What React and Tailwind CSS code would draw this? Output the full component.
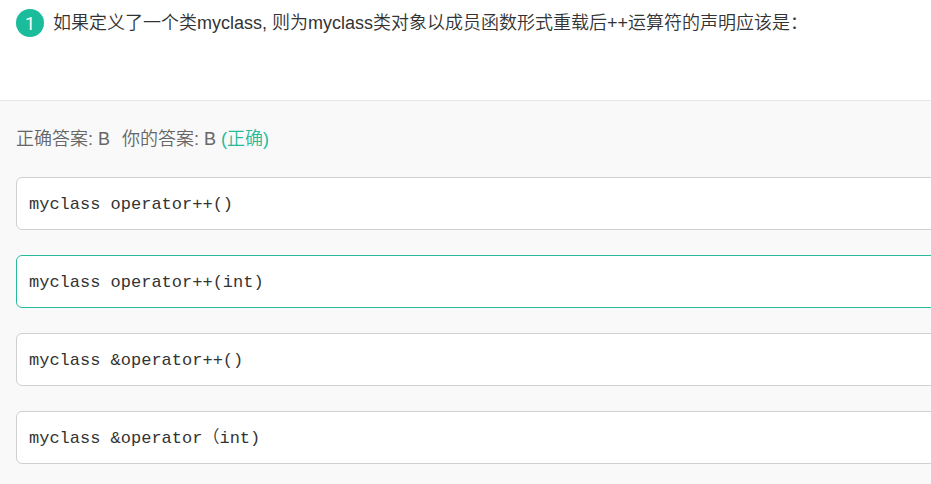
import React from 'react'

const options = [
  { id: 'A', text: 'myclass operator++()' },
  { id: 'B', text: 'myclass operator++(int)' },
  { id: 'C', text: 'myclass &operator++()' },
  { id: 'D', text: 'myclass &operator（int)' },
]

const correct = 'B'

export default function App() {
  return (
    <main className="min-h-screen overflow-x-hidden bg-[#f9f9f9] font-['Liberation_Sans','Noto_Sans_CJK_SC',sans-serif] text-[18px] font-[350]">
      <header className="flex items-start gap-[9px] border-b border-[#e8e8e8] bg-white px-4 pt-[9px] pb-[63px] text-[#333]">
        <span className="flex size-7 shrink-0 items-center justify-center rounded-full bg-[#1abc9c] font-['Roboto',sans-serif] font-normal text-white">1</span>
        <h1 className="leading-7">
          如果定义了一个类myclass, 则为myclass类对象以成员函数形式重载后++运算符的声明应该是：
        </h1>
      </header>

      <section className="pl-4 pt-6">
        <p className="flex leading-7 text-[#666]">
          <span className="mr-3">正确答案: {correct}</span>
          <span>
            你的答案: B <span className="text-[#25bb9b]">(正确)</span>
          </span>
        </p>

        {/* options run past the right edge of the panel */}
        <ul className="-mr-4 mt-6 flex flex-col gap-[25px] text-[#333]">
          {options.map(o => (
            <li
              key={o.id}
              className={`rounded-md border bg-white px-3 pt-[13px] pb-[10px] leading-7 ${o.id === correct ? 'border-[#25bb9b]' : 'border-[#d0d0d0]'}`}
            >
              <code className="block font-['Liberation_Mono','Noto_Sans_CJK_SC',monospace] text-[17px]">{o.text}</code>
            </li>
          ))}
        </ul>
      </section>
    </main>
  )
}
